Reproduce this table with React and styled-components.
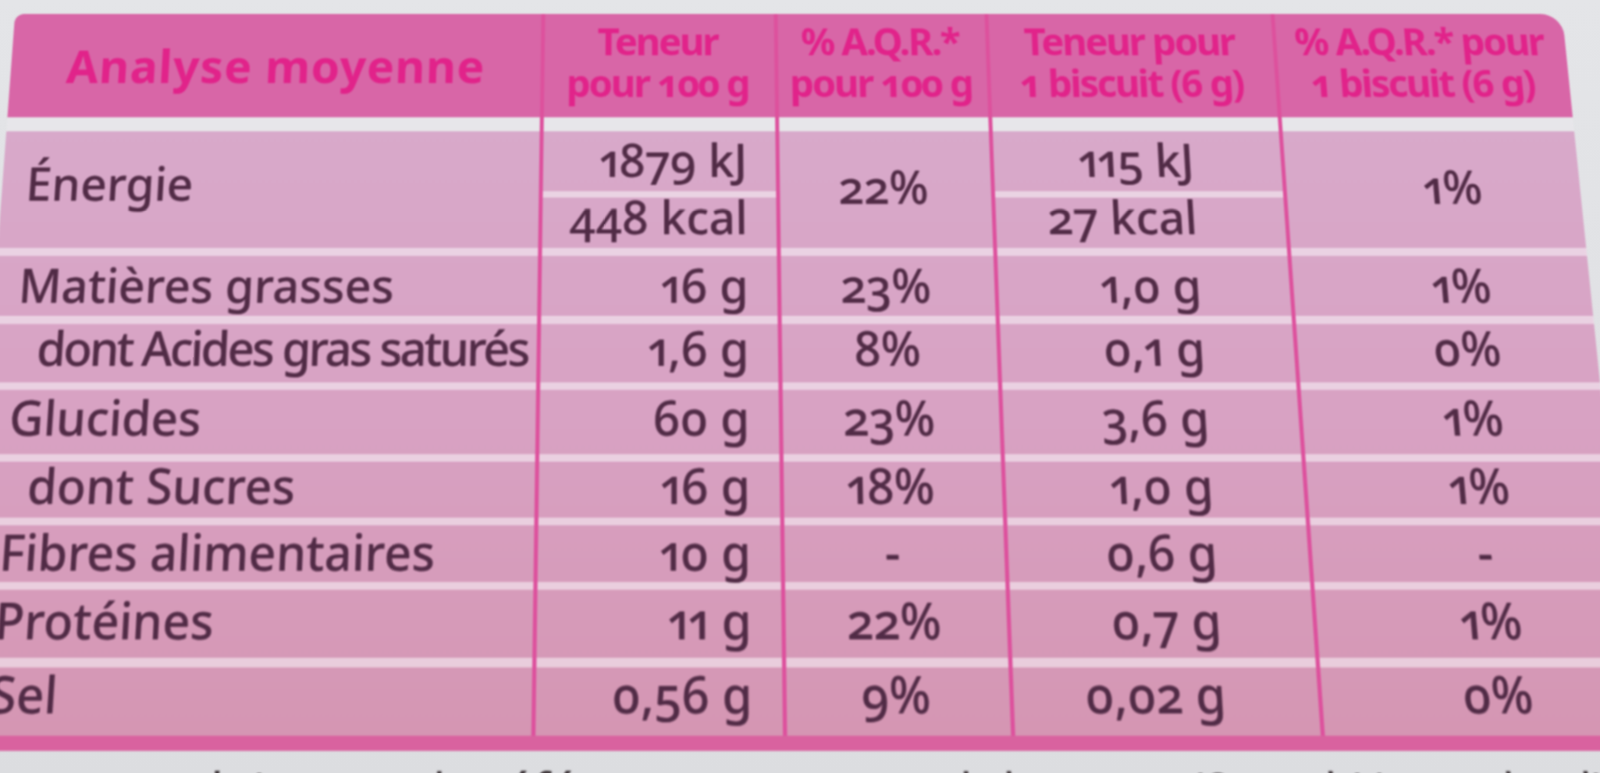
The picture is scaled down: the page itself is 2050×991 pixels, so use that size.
import React from 'react';
import styled, { createGlobalStyle } from 'styled-components';

const GlobalStyle = createGlobalStyle`
  html, body {
    margin: 0;
    padding: 0;
    overflow: hidden;
    background: #e3e4e7;
  }
  body {
    font-family: "Noto Sans", "Open Sans", "DejaVu Sans", sans-serif;
  }
`;

const C = {
  head: '#d866a7',
  headText: '#e1238a',
  line: '#dd519d',
  gap: '#e7e6ea',
  sep: 'rgba(247, 240, 246, 0.6)',
  text: '#512b46',
  bottom: '#d9629f',
};

const COLS = '677px 299px 271px 368px 1fr';

const Page = styled.main`
  width: 2050px;
  height: 991px;
  overflow: hidden;
  box-sizing: border-box;
  padding: 17px 44px 0 16px;
  background: linear-gradient(to bottom, #e4e5e8, #dcdde0);
`;

const Table = styled.section`
  transform-origin: 834px 45px;
  transform: perspective(2000px) rotateX(10.08deg);
`;

const Soft = styled.div`
  filter: blur(1px);
`;

const HeadRow = styled.div`
  display: grid;
  grid-template-columns: ${COLS};
`;

const HeadCell = styled.div`
  height: 152px;
  box-sizing: border-box;
  padding-bottom: ${p => (p.$title ? 18 : 28)}px;
  display: flex;
  align-items: center;
  justify-content: center;
  text-align: center;
  border-radius: ${p => p.$radius || '0'};
  background:
    linear-gradient(to right, ${p => (p.$div ? C.line : 'transparent')} 0 5px, transparent 5px 100%),
    linear-gradient(to bottom, ${C.head} 134px, ${C.gap} 134px);
`;

const Title = styled.h1`
  margin: 0;
  font-size: 59px;
  line-height: 1;
  font-weight: 700;
  letter-spacing: 1px;
  color: ${C.headText};
  white-space: nowrap;
`;

const HeadText = styled.div`
  display: flex;
  flex-direction: column;
  align-items: center;
  font-size: 49px;
  line-height: 54px;
  font-weight: 700;
  letter-spacing: -2.5px;
  color: ${C.headText};
  white-space: nowrap;
  font-variant-numeric: oldstyle-nums;
`;

const HeadLine = styled.span`
  display: block;
  height: 54px;
`;

const Body = styled.div`
  display: grid;
  grid-template-columns: ${COLS};
  grid-template-rows: ${p => p.$rows};
  background: linear-gradient(to bottom, #d8a9ca 0%, #d8a2c3 50%, #d596b3 100%);
  border-bottom: 17px solid ${C.bottom};
`;

const JUSTIFY = { left: 'flex-start', right: 'flex-end', center: 'center' };

const Cell = styled.div`
  grid-row: ${p => (p.$span ? `span ${p.$span}` : 'auto')};
  min-width: 0;
  box-sizing: border-box;
  display: flex;
  align-items: center;
  justify-content: ${p => JUSTIFY[p.$align]};
  padding: 0 ${p => p.$pr || 0}px ${p => p.$sep + p.$lift}px ${p => p.$pl || 0}px;
  background:
    linear-gradient(to right, ${p => (p.$div ? C.line : 'transparent')} 0 5px, transparent 5px 100%),
    linear-gradient(to bottom, transparent calc(100% - ${p => p.$sep}px), ${C.sep} calc(100% - ${p => p.$sep}px));
`;

const Text = styled.span`
  font-size: 58px;
  line-height: 1;
  font-weight: 500;
  color: ${C.text};
  white-space: nowrap;
  letter-spacing: ${p => (p.$tight ? '-3px' : '0')};
  font-variant-numeric: oldstyle-nums proportional-nums;
  text-shadow: 0 0 1px rgba(81, 43, 70, 0.55);
`;

const Note = styled.p`
  margin: 16px 0 0;
  padding-left: 290px;
  font-size: 58px;
  line-height: 1;
  color: #3a3236;
  white-space: nowrap;
  font-variant-numeric: oldstyle-nums;
`;

const COL = [
  { align: 'left', pl: 30 },
  { align: 'right', pr: 36, div: true },
  { align: 'center', div: true },
  { align: 'right', pr: 110, div: true },
  { align: 'center', pl: 54, div: true },
];

const headers = [
  ['Teneur', 'pour 100 g'],
  ['% A.Q.R.*', 'pour 100 g'],
  ['Teneur pour', '1 biscuit (6 g)'],
  ['% A.Q.R.* pour', '1 biscuit (6 g)'],
];

const rows = [
  { label: 'Matières grasses', v: ['16 g', '23%', '1,0 g', '1%'], h: 84, sep: 10, lift: 2 },
  { label: 'dont Acides gras saturés', sub: true, tight: true, v: ['1,6 g', '8%', '0,1 g', '0%'], h: 80, sep: 9, lift: 14 },
  { label: 'Glucides', v: ['60 g', '23%', '3,6 g', '1%'], h: 86, sep: 9, lift: 12 },
  { label: 'dont Sucres', sub: true, v: ['16 g', '18%', '1,0 g', '1%'], h: 75, sep: 9, lift: 10 },
  { label: 'Fibres alimentaires', v: ['10 g', '-', '0,6 g', '-'], h: 75, sep: 9, lift: 4 },
  { label: 'Protéines', v: ['11 g', '22%', '0,7 g', '1%'], h: 89, sep: 11, lift: 8 },
  { label: 'Sel', v: ['0,56 g', '9%', '0,02 g', '0%'], h: 77, sep: 0, lift: 18 },
];

const ENERGY_ROWS = [84, 73];
const rowTemplate = [...ENERGY_ROWS, ...rows.map(r => r.h)].map(h => `${h}px`).join(' ');

function DataCell({ col, sep, lift = 10, span, children, indent, tight }) {
  const c = COL[col];
  return (
    <Cell
      $align={c.align}
      $pl={(c.pl || 0) + (indent ? 28 : 0)}
      $pr={c.pr}
      $div={c.div}
      $sep={sep}
      $lift={lift}
      $span={span}
    >
      <Text $tight={tight}>{children}</Text>
    </Cell>
  );
}

export default function App() {
  return (
    <>
      <GlobalStyle />
      <Page>
        <Table>
          <Soft>
            <HeadRow>
              <HeadCell $title $radius="12px 0 0 0">
                <Title>Analyse moyenne</Title>
              </HeadCell>
              {headers.map((lines, i) => (
                <HeadCell key={i} $div $radius={i === headers.length - 1 ? '0 28px 0 0' : '0'}>
                  <HeadText>
                    {lines.map(l => (
                      <HeadLine key={l}>{l}</HeadLine>
                    ))}
                  </HeadText>
                </HeadCell>
              ))}
            </HeadRow>

            <Body $rows={rowTemplate}>
              <DataCell col={0} sep={10} lift={16} span={2}>Énergie</DataCell>
              <DataCell col={1} sep={8} lift={4}>1879 kJ</DataCell>
              <DataCell col={2} sep={10} lift={8} span={2}>22%</DataCell>
              <DataCell col={3} sep={8} lift={4}>115 kJ</DataCell>
              <DataCell col={4} sep={10} lift={8} span={2}>1%</DataCell>
              <DataCell col={1} sep={10} lift={16}>448 kcal</DataCell>
              <DataCell col={3} sep={10} lift={16}>27 kcal</DataCell>

              {rows.map(r => (
                <React.Fragment key={r.label}>
                  <DataCell col={0} sep={r.sep} lift={r.lift} indent={r.sub} tight={r.tight}>
                    {r.label}
                  </DataCell>
                  {r.v.map((val, i) => (
                    <DataCell key={i} col={i + 1} sep={r.sep} lift={r.lift}>
                      {val}
                    </DataCell>
                  ))}
                </React.Fragment>
              ))}
            </Body>

            <Note>* Apport de référence pour un adulte-type (8400 kJ/2000 kcal).</Note>
          </Soft>
        </Table>
      </Page>
    </>
  );
}
